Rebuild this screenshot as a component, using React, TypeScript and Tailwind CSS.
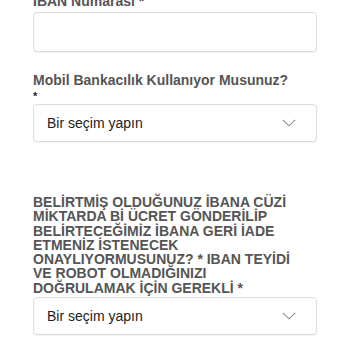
function Chevron() {
  return (
    <svg width="14" height="8" viewBox="0 0 14 8" fill="none">
      <polyline points="0.8,0.8 7,6.8 13.2,0.8" stroke="#8c8c8c" strokeWidth="1.1" />
    </svg>
  );
}

function SelectBox() {
  return (
    <div className="flex h-[38px] items-center justify-between rounded-[4px] border border-[#dcdcdc] bg-white pl-[13px] pr-[20px] shadow-[0_1px_1px_rgba(0,0,0,0.05)]">
      <span className="text-[14px] text-[#222]">Bir seçim yapın</span>
      <Chevron />
    </div>
  );
}

export default function App() {
  return (
    <div className="h-[350px] w-[350px] overflow-hidden bg-white font-['Liberation_Sans',Arial,sans-serif]">
      <div className="mx-[33px] -mt-[7px] w-[284px]">
        <label className="block text-[14px] font-bold leading-[17px] text-[#555]">IBAN Numarası *</label>
        <div className="mt-[2px] h-[40px] rounded-[4px] border border-[#dcdcdc] bg-white shadow-[0_1px_1px_rgba(0,0,0,0.05)]" />

        <label className="mt-[20px] block text-[14px] font-bold leading-[17px] text-[#555]">
          Mobil Bankacılık Kullanıyor Musunuz?
        </label>
        <div className="h-[15px] text-[11px] font-bold leading-[15px] text-[#222]">*</div>
        <SelectBox />

        <label className="mt-[53px] block w-[270px] text-[14px] font-bold leading-[14.3px] text-[#555]">
          BELİRTMİŞ OLDUĞUNUZ İBANA CÜZİ MİKTARDA Bİ ÜCRET GÖNDERİLİP BELİRTECEĞİMİZ İBANA GERİ İADE ETMENİZ
          İSTENECEK ONAYLIYORMUSUNUZ? * IBAN TEYİDİ VE ROBOT OLMADIĞINIZI DOĞRULAMAK İÇİN GEREKLİ *
        </label>
        <div className="mt-[2px]">
          <SelectBox />
        </div>
      </div>
    </div>
  );
}
